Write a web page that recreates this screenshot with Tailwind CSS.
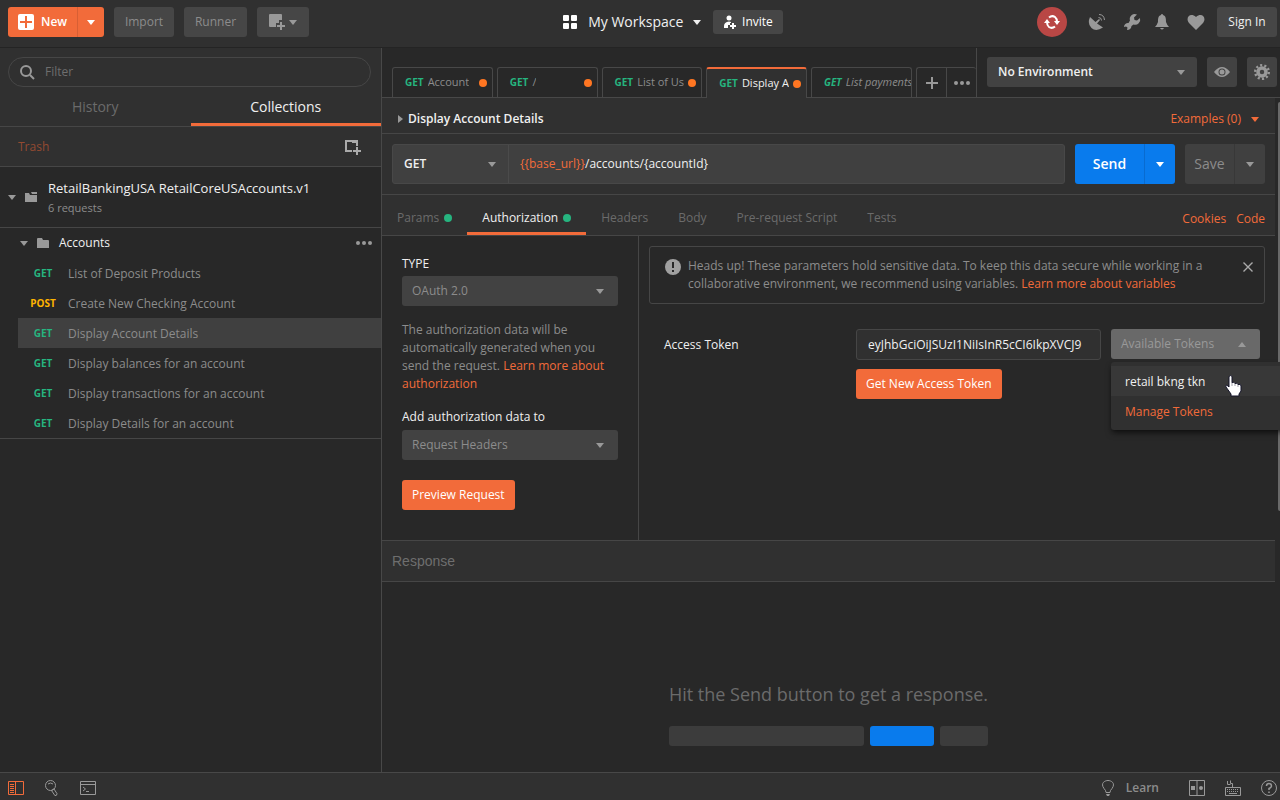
<!DOCTYPE html>
<html lang="en">

<head>
    <meta charset="UTF-8" />
    <meta name="viewport" content="width=device-width, initial-scale=1.0" />
    <title>Postman</title>
    <script src="https://cdn.jsdelivr.net/npm/@tailwindcss/browser@4"></script>
</head>

<body class="h-screen flex flex-col overflow-hidden bg-[#282828] font-['Open_Sans',sans-serif] text-xs text-[#8c8c8c]">

    <!-- Shared icons -->
    <svg class="hidden">
        <symbol id="down" viewBox="0 0 8 5"><path fill="currentColor" d="M0 0h8L4 5z" /></symbol>
        <symbol id="dots" viewBox="0 0 16 4">
            <g fill="currentColor"><circle cx="2" cy="2" r="2" /><circle cx="8" cy="2" r="2" /><circle cx="14" cy="2" r="2" /></g>
        </symbol>
    </svg>

    <!-- Header -->
    <header class="h-12 shrink-0 flex items-center bg-[#303030] border-b border-[#242424] pb-[3px] font-medium">
        <div class="w-[44%] flex items-center gap-[10px] pl-2">
            <div class="flex h-[30px] rounded-[3px] overflow-hidden bg-[#f26b3a] text-white">
                <button class="w-[69px] flex items-center gap-[7px] pl-[10px] font-semibold">
                    <svg class="size-4" viewBox="0 0 16 16"><rect width="16" height="16" rx="2" fill="#fff" /><path d="M8 2v12M2 8h12" stroke="#f26b3a" stroke-width="2" /></svg>
                    New
                </button>
                <button aria-label="New options" class="w-[27px] border-l border-[#d75f34] flex items-center justify-center"><svg class="w-2 h-[5px]"><use href="#down" /></svg></button>
            </div>
            <button class="h-[30px] w-[60px] rounded-[3px] bg-[#464646]">Import</button>
            <button class="h-[30px] w-[63px] rounded-[3px] bg-[#464646]">Runner</button>
            <button aria-label="New window" class="h-[30px] w-[52px] rounded-[3px] bg-[#464646] text-[#999] flex items-center justify-center gap-1">
                <svg class="size-4" viewBox="0 0 16 16" fill="currentColor"><path d="M1 0h11a1 1 0 0 1 1 1v5h-3v3H7v4H1a1 1 0 0 1-1-1V1a1 1 0 0 1 1-1z" /><path d="M11 8h2v3h3v2h-3v3h-2v-3H8v-2h3z" /></svg>
                <svg class="w-2 h-[5px]"><use href="#down" /></svg>
            </button>
        </div>
        <div class="flex items-center">
            <button class="flex items-center text-[14px] font-normal text-[#f0f0f0]">
                <svg class="size-[14px] mr-[11px]" viewBox="0 0 14 14" fill="#fff"><rect width="6" height="6" rx="1" /><rect x="8" width="6" height="6" rx="1" /><rect y="8" width="6" height="6" rx="1" /><rect x="8" y="8" width="6" height="6" rx="1" /></svg>
                My Workspace
                <svg class="w-2 h-[5px] ml-[10px]"><use href="#down" /></svg>
            </button>
            <button class="ml-3 h-6 w-[70px] rounded-[3px] bg-[#464646] text-white flex items-center justify-center gap-[6px]">
                <svg class="w-3 h-[14px]" viewBox="0 0 12 14" fill="#fff"><circle cx="5" cy="3" r="2.500" /><path d="M0 13v-2q0-4 5-4.500L7 7v1H6v2H4v3z" /><path d="M8 8h2v2h2v2h-2v2H8v-2H6v-2h2z" /></svg>
                Invite
            </button>
        </div>
        <div class="ml-auto pr-[3px] flex items-center text-[#999]">
            <button aria-label="Sync" class="size-[30px] rounded-full bg-[#b94745] text-white flex items-center justify-center">
                <svg class="size-4" viewBox="0 0 16 16" fill="none" stroke="currentColor" stroke-width="2"><path d="M5 3.500Q8 1 11 3q2 1.500 2 5M11 12.500Q8 15 5 13q-2-1.500-2-5" /><path d="M10 7h6l-3 4zM0 9h6L3 5z" fill="currentColor" stroke="none" /></svg>
            </button>
            <button aria-label="Capture" class="ml-[21px]"><svg class="size-[18px]" viewBox="0 0 18 18"><path fill="currentColor" d="M2 4l5.500 5L11 6l1 1-3 3.500 6 4Q8 19 3.500 15T2 4z" /><path fill="none" stroke="currentColor" d="M10.500 4.500q3 0 3 3M11 1.500q5 0 5.500 5.500" /></svg></button>
            <button aria-label="Settings" class="ml-[17px]"><svg class="size-[18px]" viewBox="0 0 18 18"><path fill="currentColor" d="M14 1.500a5 5 0 0 0-7 6L5.500 10A4 4 0 0 0 1 14l2-.500 1.500 1L4 17q4 0 4.500-4l2-1.500a5.200 5.200 0 0 0 6.500-6.500l-3 2.500-2.500-.500-.500-2.500z" /></svg></button>
            <button aria-label="Notifications" class="ml-[14px]"><svg class="w-[14px] h-[18px]" viewBox="0 0 14 18"><path fill="currentColor" d="M7 1q1 0 1 1c3 1 3 4 3 7q1 3 3 5H0q2-2 3-5c0-3 0-6 3-7q0-1 1-1zM5 15h4q-2 3-4 0z" /></svg></button>
            <button aria-label="Favourites" class="ml-[18px]"><svg class="w-[18px] h-4" viewBox="0 0 18 16"><path fill="currentColor" d="M9 16L2 9C-2 4 3-2 9 3c6-5 11 1 7 6z" /></svg></button>
            <button class="ml-3 h-[30px] w-[60px] rounded-[3px] bg-[#464646] text-[#f0f0f0]">Sign In</button>
        </div>
    </header>

    <main class="flex-1 min-h-0 flex">

        <!-- Sidebar -->
        <aside class="w-[382px] shrink-0 border-r border-[#484848]">
            <div class="bg-[#303030]">
                <div class="pt-[9px] pl-2 pr-[10px]">
                    <label class="h-[30px] flex items-center gap-[10px] pl-[11px] border border-[#464646] rounded-full">
                        <svg class="size-[15px]" viewBox="0 0 15 15" fill="none" stroke="#999" stroke-width="2"><circle cx="6" cy="6" r="5" /><path d="M10 10l4 4" /></svg>
                        <input type="text" placeholder="Filter" aria-label="Filter" class="bg-transparent outline-none flex-1 placeholder:text-[#6e6e6e]" />
                    </label>
                </div>
                <div class="flex h-10 border-b border-[#464646] text-[14px]">
                    <button class="flex-1 pt-[2px] text-[#6b6b6b]">History</button>
                    <button class="flex-1 pt-[5px] border-b-[3px] border-[#f26b3a] text-[#f0f0f0]">Collections</button>
                </div>
                <div class="flex items-center justify-between h-10 border-b border-[#464646] pl-[18px] pr-5">
                    <a href="#" class="text-[#944a30]">Trash</a>
                    <button aria-label="New collection"><svg class="size-4" viewBox="0 0 16 16" fill="none" stroke="#aaa" stroke-width="2"><path d="M7 12H1V2h11v5M12 8v8M8 12h8" /><path d="M7 3.500h4" stroke-width="1" /></svg></button>
                </div>
            </div>

            <div class="flex items-center h-[61px] border-b border-[#464646] pl-2">
                <svg class="w-2 h-[5px] text-[#999]"><use href="#down" /></svg>
                <svg class="w-3 h-[10px] ml-[9px]" viewBox="0 0 12 10" fill="#999"><path d="M0 1h4l1 2h7v7H0z" /><path d="M6 0h6v2H7z" /></svg>
                <div class="ml-[11px] pt-[2px] leading-5">
                    <h2 class="text-[#f0f0f0] text-[13px]">RetailBankingUSA RetailCoreUSAccounts.v1</h2>
                    <p class="text-[11px]">6 requests</p>
                </div>
            </div>

            <div class="border-b border-[#464646]">
                <div class="flex items-center h-[30px] pl-5 pr-[9px]">
                    <svg class="w-2 h-[5px] text-[#999]"><use href="#down" /></svg>
                    <svg class="w-3 h-[10px] ml-[9px]" viewBox="0 0 12 10" fill="#999"><path d="M0 1q0-1 1-1h4l1 2h5q1 0 1 1v7H0z" /></svg>
                    <span class="ml-[10px] text-[#f0f0f0]">Accounts</span>
                    <button aria-label="More actions" class="ml-auto text-[#999]"><svg class="w-4 h-1"><use href="#dots" /></svg></button>
                </div>
                <ul class="pl-[18px]">
                    <li class="flex items-center h-[30px] pt-px"><b class="w-[50px] text-center text-[10px] text-[#26b47f]">GET</b>List of Deposit Products</li>
                    <li class="flex items-center h-[30px] pt-px"><b class="w-[50px] text-center text-[10px] text-[#ffb400]">POST</b>Create New Checking Account</li>
                    <li class="flex items-center h-[30px] pt-px bg-[#404040]"><b class="w-[50px] text-center text-[10px] text-[#26b47f]">GET</b>Display Account Details</li>
                    <li class="flex items-center h-[30px] pt-px"><b class="w-[50px] text-center text-[10px] text-[#26b47f]">GET</b>Display balances for an account</li>
                    <li class="flex items-center h-[30px] pt-px"><b class="w-[50px] text-center text-[10px] text-[#26b47f]">GET</b>Display transactions for an account</li>
                    <li class="flex items-center h-[30px] pt-px"><b class="w-[50px] text-center text-[10px] text-[#26b47f]">GET</b>Display Details for an account</li>
                </ul>
            </div>
        </aside>

        <section class="flex-1 min-w-0 flex flex-col">

            <!-- Request tabs and environment -->
            <div class="flex h-[50px] shrink-0">
                <div class="flex-1 min-w-0 flex items-end gap-1 pl-[10px] border-b border-[#484848] text-[11px]">
                    <button class="w-[101px] h-[30px] flex items-center gap-1 px-3 pr-[5px] border border-b-0 border-[#484848] rounded-t-[3px]"><b class="text-[10px] text-[#26b47f]">GET</b><span class="truncate">Account</span><i class="size-2 shrink-0 rounded-full bg-[#ff7622] ml-auto"></i></button>
                    <button class="w-[101px] h-[30px] flex items-center gap-1 px-3 pr-[5px] border border-b-0 border-[#484848] rounded-t-[3px]"><b class="text-[10px] text-[#26b47f]">GET</b><span class="truncate">/</span><i class="size-2 shrink-0 rounded-full bg-[#ff7622] ml-auto"></i></button>
                    <button class="w-[101px] h-[30px] flex items-center gap-1 px-3 pr-[5px] border border-b-0 border-[#484848] rounded-t-[3px]"><b class="text-[10px] text-[#26b47f]">GET</b><span class="truncate">List of Us</span><i class="size-2 shrink-0 rounded-full bg-[#ff7622] ml-auto"></i></button>
                    <button class="w-[101px] h-[31px] -mb-px flex items-center gap-1 px-3 pr-[5px] border border-b-0 border-t-2 border-[#484848] border-t-[#f26b3a] rounded-t-[3px] bg-[#303030] text-[#f0f0f0]"><b class="text-[10px] text-[#26b47f]">GET</b><span class="truncate">Display A</span><i class="size-2 shrink-0 rounded-full bg-[#ff7622] ml-auto"></i></button>
                    <button class="w-[101px] h-[30px] flex items-center gap-1 pl-3 border border-b-0 border-[#484848] rounded-t-[3px] italic"><b class="text-[10px] text-[#26b47f]">GET</b><span class="overflow-hidden whitespace-nowrap">List payments</span></button>
                    <div class="flex h-[30px] border border-b-0 border-r-0 border-[#484848] rounded-t-[3px]">
                        <button aria-label="New tab" class="w-[29px] flex items-center justify-center"><svg class="size-3" viewBox="0 0 12 12" stroke="#999" stroke-width="2"><path d="M6 0v12M0 6h12" /></svg></button>
                        <button aria-label="Tab options" class="w-[30px] border-l border-[#484848] flex items-center justify-center text-[#999]"><svg class="w-4 h-1"><use href="#dots" /></svg></button>
                    </div>
                </div>
                <div class="flex items-start gap-[10px] pt-[9px] pl-[10px] pr-[3px] border-l border-b border-[#484848]">
                    <div class="relative flex items-center">
                        <select aria-label="Environment" class="appearance-none outline-none h-[30px] w-[210px] rounded-[3px] bg-[#424242] pl-[11px] font-semibold text-[#f0f0f0]"><option>No Environment</option></select>
                        <svg class="absolute right-3 w-2 h-[5px] text-[#999]"><use href="#down" /></svg>
                    </div>
                    <button aria-label="Environment quick look" class="size-[30px] rounded-[3px] bg-[#424242] flex items-center justify-center"><svg class="w-4 h-[10px]" viewBox="0 0 16 10"><path fill="#999" fill-rule="evenodd" d="M0 5q8-10 16 0-8 10-16 0zM8 1.500a3.500 3.500 0 1 0 0 7 3.500 3.500 0 0 0 0-7z" /><circle cx="8" cy="5" r="2.500" fill="#999" /></svg></button>
                    <button aria-label="Manage environments" class="size-[30px] rounded-[3px] bg-[#424242] flex items-center justify-center"><svg class="size-4" viewBox="0 0 16 16" fill="none" stroke="#999"><circle cx="8" cy="8" r="4" stroke-width="3.500" /><circle cx="8" cy="8" r="6.800" stroke-width="2.400" stroke-dasharray="2.140 2.132" /></svg></button>
                </div>
            </div>

            <div class="flex-1 min-h-0 flex">
                <div class="flex-1 min-w-0 flex flex-col">

                    <div class="h-9 shrink-0 flex items-center bg-[#303030] border-b border-[#464646] px-4 pt-[7px]">
                        <svg class="w-[5px] h-2" viewBox="0 0 5 8" fill="#999"><path d="M0 0v8l5-4z" /></svg>
                        <h1 class="ml-[5px] font-semibold text-[#f0f0f0]">Display Account Details</h1>
                        <button class="ml-auto flex items-center gap-[10px] text-[#f26b3a]">Examples (0)<svg class="w-2 h-[5px]"><use href="#down" /></svg></button>
                    </div>

                    <!-- URL bar -->
                    <div class="h-[61px] shrink-0 flex items-center gap-[10px] px-[10px] bg-[#303030] border-b border-[#464646]">
                        <div class="flex-1 min-w-0 flex h-10 border border-[#484848] rounded-[3px] bg-[#404040]">
                            <div class="relative flex items-center border-r border-[#4b4b4b]">
                                <select aria-label="Method" class="appearance-none outline-none h-full w-[115px] pl-[11px] font-semibold text-[#f0f0f0]"><option>GET</option></select>
                                <svg class="absolute right-3 w-2 h-[5px] text-[#999]"><use href="#down" /></svg>
                            </div>
                            <div role="textbox" aria-label="Request URL" contenteditable="true" class="flex-1 flex items-center pl-[11px] outline-none text-[#f0f0f0]"><span class="text-[#f26b3a]">{{base_url}}</span>/accounts/{accountId}</div>
                        </div>
                        <div class="flex h-10 rounded-[3px] bg-[#097bed] text-white">
                            <button class="w-[69px] text-[14px] font-semibold">Send</button>
                            <button aria-label="Send options" class="w-[31px] border-l border-[#086bd0] flex items-center justify-center"><svg class="w-2 h-[5px]"><use href="#down" /></svg></button>
                        </div>
                        <div class="flex h-10 rounded-[3px] bg-[#404040]">
                            <button class="w-[49px] text-[14px] font-medium">Save</button>
                            <button aria-label="Save options" class="w-[31px] border-l border-[#383838] flex items-center justify-center text-[#999]"><svg class="w-2 h-[5px]"><use href="#down" /></svg></button>
                        </div>
                    </div>

                    <!-- Request sections -->
                    <div class="h-[41px] shrink-0 flex bg-[#303030] border-b border-[#464646] text-[#6b6b6b]">
                        <button class="flex items-center gap-[5px] pt-[6px] px-[15px]">Params<i class="size-2 rounded-full bg-[#26b47f]"></i></button>
                        <button class="flex items-center gap-[5px] pt-[9px] px-[15px] border-b-[3px] border-[#f26b3a] font-medium text-[#f0f0f0]">Authorization<i class="size-2 rounded-full bg-[#26b47f]"></i></button>
                        <button class="pt-[6px] px-[15px]">Headers</button>
                        <button class="pt-[6px] px-[15px]">Body</button>
                        <button class="pt-[6px] px-[15px]">Pre-request Script</button>
                        <button class="pt-[6px] px-[15px]">Tests</button>
                        <div class="ml-auto flex items-center gap-[10px] pt-[7px] pr-[10px] text-[#f26b3a]">
                            <a href="#">Cookies</a>
                            <a href="#">Code</a>
                        </div>
                    </div>

                    <!-- Authorization -->
                    <div class="h-[305px] shrink-0 flex border-b border-[#464646]">
                        <div class="w-[257px] shrink-0 border-r border-[#464646] px-5 pt-[19px] leading-[18px]">
                            <label for="type" class="block font-medium text-[#f0f0f0]">TYPE</label>
                            <div class="relative flex items-center mt-[3px]">
                                <select id="type" class="appearance-none outline-none h-[30px] w-full rounded-[3px] bg-[#424242] pl-[10px]"><option>OAuth 2.0</option></select>
                                <svg class="absolute right-[14px] w-2 h-[5px] text-[#999]"><use href="#down" /></svg>
                            </div>
                            <p class="mt-[15px]">The authorization data will be automatically generated when you send the request. <a href="#" class="text-[#f26b3a]">Learn more about authorization</a></p>
                            <label for="target" class="block mt-[15px] font-medium text-[#f0f0f0]">Add authorization data to</label>
                            <div class="relative flex items-center mt-1">
                                <select id="target" class="appearance-none outline-none h-[30px] w-full rounded-[3px] bg-[#424242] pl-[10px]"><option>Request Headers</option></select>
                                <svg class="absolute right-[14px] w-2 h-[5px] text-[#999]"><use href="#down" /></svg>
                            </div>
                            <button class="mt-5 h-[30px] px-[10px] rounded-[3px] bg-[#f26b3a] font-medium text-white">Preview Request</button>
                        </div>
                        <div class="flex-1 min-w-0 p-[10px]">
                            <div class="flex items-start h-[58px] border border-[#464646] rounded-[3px] pt-[10px] px-[15px] leading-[18px]">
                                <svg class="size-4 mt-[2px] shrink-0" viewBox="0 0 16 16"><circle cx="8" cy="8" r="8" fill="#a0a0a0" /><path d="M8 3v6M8 11v2" stroke="#282828" stroke-width="2" /></svg>
                                <p class="ml-[7px] w-[530px]">Heads up! These parameters hold sensitive data. To keep this data secure while working in a collaborative environment, we recommend using variables. <a href="#" class="text-[#f26b3a]">Learn more about variables</a></p>
                                <button aria-label="Close" class="ml-auto mt-[5px] -mr-[4px]"><svg class="size-[10px]" viewBox="0 0 10 10" stroke="#aaa" stroke-width="1.400"><path d="M.500.500l9 9M9.500.500l-9 9" /></svg></button>
                            </div>
                            <div class="flex items-start mt-[25px] pl-[15px]">
                                <label for="token" class="flex-1 leading-8 text-[#f0f0f0]">Access Token</label>
                                <div class="w-[245px]">
                                    <input id="token" type="text" value="eyJhbGciOiJSUzI1NiIsInR5cCI6IkpXVCJ9" class="block w-full h-[31px] border border-[#464646] rounded-[3px] bg-[#303030] px-[11px] pr-4 outline-none text-ellipsis text-[#f0f0f0]" />
                                    <button class="mt-[9px] h-[30px] px-[10px] rounded-[3px] bg-[#f26b3a] font-medium text-white">Get New Access Token</button>
                                </div>
                                <div class="relative ml-[10px] mr-[5px]">
                                    <button class="w-[149px] h-[30px] flex items-center justify-between pl-[10px] pr-[14px] rounded-[3px] bg-[#696969] text-[#999]">Available Tokens<svg class="w-2 h-[5px] rotate-180"><use href="#down" /></svg></button>
                                    <!-- Token menu -->
                                    <div class="absolute z-10 left-0 top-[33px] w-[180px] py-1 rounded-[3px] bg-[#303030] shadow-md shadow-black/50">
                                        <button class="block w-full h-[30px] pt-[2px] pl-[14px] text-left bg-[#383838] text-[#f0f0f0]">retail bkng tkn</button>
                                        <button class="block w-full h-[30px] pt-[2px] pl-[14px] text-left text-[#f26b3a]">Manage Tokens</button>
                                        <svg class="absolute left-[114px] top-[13px] w-[17px] h-[22px]" viewBox="0 0 17 22"><path fill="#fff" stroke="#15152a" d="M4 1.500q2-2 3 0v6q2-1 3 1 2-1 3 1 3-1 3 1.500v5l-2 3v2H6v-2l-5-7q-1-3 2-1l1 1z" /><path stroke="#15152a" d="M7 7v4M10 8v3M13 9v3" stroke-opacity=".4" /></svg>
                                    </div>
                                </div>
                            </div>
                        </div>
                    </div>

                    <!-- Response -->
                    <div class="h-[41px] shrink-0 flex items-center bg-[#303030] border-b border-[#464646] pl-[10px] font-['Liberation_Sans',sans-serif] text-[14px] text-[#6e6e6e]">Response</div>
                    <div class="flex-1 min-h-0 flex flex-col items-center justify-end pb-[26px]">
                        <p class="text-[18px] leading-6 text-[#6b6b6b]">Hit the Send button to get a response.</p>
                        <div class="flex gap-[6px] mt-5">
                            <div class="w-[195px] h-5 rounded-[3px] bg-[#3c3c3c]"></div>
                            <div class="w-16 h-5 rounded-[3px] bg-[#097bed]"></div>
                            <div class="w-12 h-5 rounded-[3px] bg-[#3c3c3c]"></div>
                        </div>
                    </div>
                </div>

                <!-- Scrollbar -->
                <div class="w-[5px] shrink-0 pl-[3px] pt-1 bg-[#282828]">
                    <div class="h-[61%] rounded-l-full bg-[#696969]"></div>
                </div>
            </div>
        </section>
    </main>

    <!-- Status bar -->
    <footer class="h-7 shrink-0 flex items-center bg-[#303030] border-t border-[#484848] pl-2 pr-[3px] pt-[3px] text-[#999]">
        <button aria-label="Toggle sidebar"><svg class="w-4 h-[14px]" viewBox="0 0 16 14" fill="none" stroke="#f26b3a"><path d="M.500.500h15v13H.500zM7.500 0v14M2 3.500h4M2 5.500h4M2 7.500h4M2 9.500h4M2 11.500h4" /></svg></button>
        <button aria-label="Find" class="ml-[21px]"><svg class="w-[13px] h-4" viewBox="0 0 13 16" fill="none" stroke="currentColor"><circle cx="5.500" cy="5.500" r="5" /><path d="M3 4q2.500-2 5 0M6.500 10.500l1.500-1 .800-.800 3.200 5q0 2-2 2z" /></svg></button>
        <button aria-label="Console" class="ml-[22px]"><svg class="w-4 h-[14px]" viewBox="0 0 16 14" fill="none" stroke="currentColor"><path d="M.500.500h15v13H.500zM0 3.500h16M3 6l2.500 2L3 10M6 10.500h3" /></svg></button>
        <div class="ml-auto flex items-center">
            <button class="flex items-center gap-3 font-semibold text-[#8c8c8c]"><svg class="w-3 h-4" viewBox="0 0 12 16" fill="none" stroke="#999"><path d="M4 12.500q0-2-2-4C-2 3 3 .500 6 .500s8 2.500 4 8q-2 2-2 4z" /><path d="M4 14h4l-1 2H5z" fill="#999" stroke="none" /></svg>Learn</button>
            <button aria-label="Two pane view" class="ml-[30px]"><svg class="w-4 h-4" viewBox="0 0 16 16"><path fill="none" stroke="currentColor" d="M.500.500h15v15H.500zM8 0v16" /><path fill="currentColor" d="M2 6h4v4H2z" /><circle cx="12" cy="8" r="2" fill="currentColor" /></svg></button>
            <button aria-label="Keyboard shortcuts" class="ml-5"><svg class="w-4 h-4" viewBox="0 0 16 16" fill="none" stroke="currentColor"><path d="M.500 7.500h15v8H.500zM7.500 7V3.500h-2V.500M5.500 4.500h-3V1" /><path d="M2 9.500h12M2 11.500h12" stroke-dasharray="1 1" /><path d="M4 13.500h8" /></svg></button>
            <button aria-label="Help" class="ml-5"><svg class="w-4 h-4" viewBox="0 0 16 16" fill="none" stroke="currentColor"><circle cx="8" cy="8" r="7.500" /><path d="M5.500 6q0-2.500 2.500-2.500T10.500 6Q10.500 7.500 8 8.500V10M8 11.500V13" stroke-width="1.500" /></svg></button>
        </div>
    </footer>
</body>

</html>
